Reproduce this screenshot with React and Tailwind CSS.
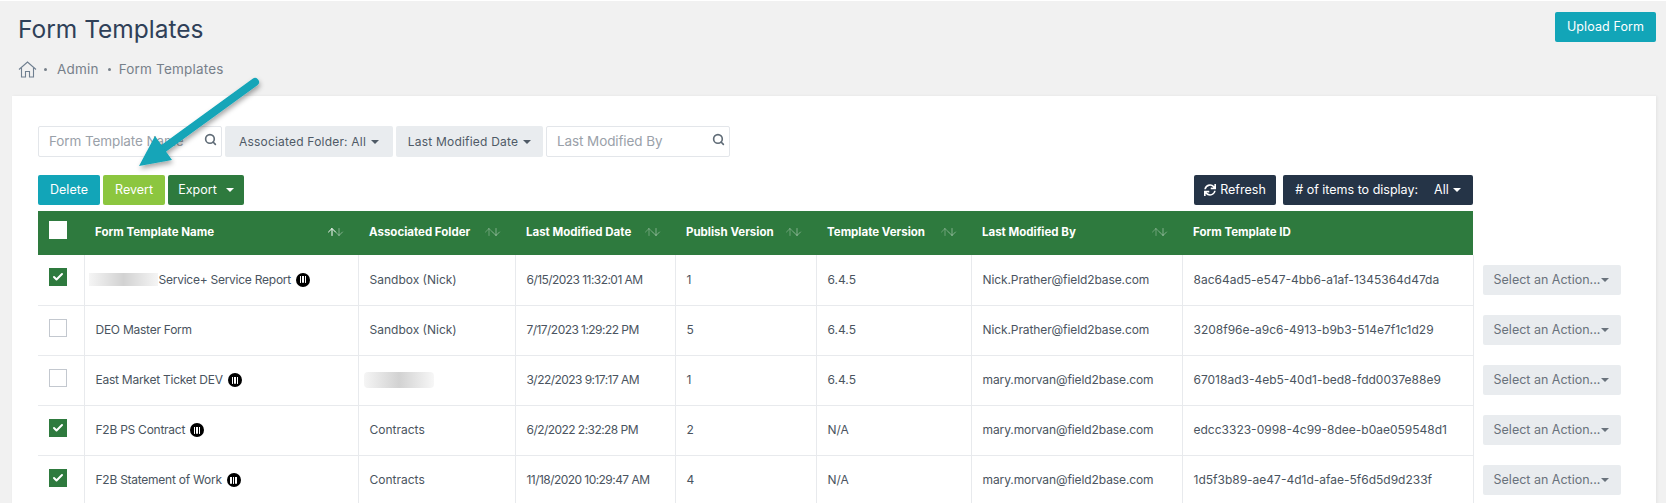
import React from "react"
import { Search, ArrowUp, ArrowDown, Check } from "lucide-react"
import { FaSync } from "react-icons/fa"

const rows = [
  { checked: true, name: "Service+ Service Report", blurName: true, badge: true, folder: "Sandbox (Nick)", date: "6/15/2023 11:32:01 AM", pub: "1", tpl: "6.4.5", by: "Nick.Prather@field2base.com", id: "8ac64ad5-e547-4bb6-a1af-1345364d47da" },
  { checked: false, name: "DEO Master Form", folder: "Sandbox (Nick)", date: "7/17/2023 1:29:22 PM", pub: "5", tpl: "6.4.5", by: "Nick.Prather@field2base.com", id: "3208f96e-a9c6-4913-b9b3-514e7f1c1d29" },
  { checked: false, name: "East Market Ticket DEV", badge: true, blurFolder: true, date: "3/22/2023 9:17:17 AM", pub: "1", tpl: "6.4.5", by: "mary.morvan@field2base.com", id: "67018ad3-4eb5-40d1-bed8-fdd0037e88e9" },
  { checked: true, name: "F2B PS Contract", badge: true, folder: "Contracts", date: "6/2/2022 2:32:28 PM", pub: "2", tpl: "N/A", by: "mary.morvan@field2base.com", id: "edcc3323-0998-4c99-8dee-b0ae059548d1" },
  { checked: true, name: "F2B Statement of Work", badge: true, folder: "Contracts", date: "11/18/2020 10:29:47 AM", pub: "4", tpl: "N/A", by: "mary.morvan@field2base.com", id: "1d5f3b89-ae47-4d1d-afae-5f6d5d9d233f" },
]

const headers = [
  { label: "Form Template Name", sort: true, active: true },
  { label: "Associated Folder", sort: true },
  { label: "Last Modified Date", sort: true },
  { label: "Publish Version", sort: true },
  { label: "Template Version", sort: true },
  { label: "Last Modified By", sort: true },
  { label: "Form Template ID" },
]

function Caret({ className = "" }) {
  return <span className={"inline-block w-0 h-0 border-x-[4px] border-x-transparent border-t-[4px] border-t-current " + className} />
}

function SortIcon({ active }) {
  return (
    <span className={"flex items-center -space-x-[5px] mb-[2px] " + (active ? "text-white" : "text-white/30")}>
      <ArrowUp size={12} strokeWidth={2} />
      <ArrowDown size={12} strokeWidth={2} className="text-white/40" />
    </span>
  )
}

function WBadge() {
  return (
    <span className="inline-flex items-center justify-center gap-[1px] w-[14px] h-[14px] rounded-full bg-black align-middle ml-[5px] shrink-0">
      <span className="w-[1.5px] h-[7px] bg-white rounded-b-[1px]" />
      <span className="w-[1.5px] h-[7px] bg-white rounded-b-[1px]" />
      <span className="w-[1.5px] h-[7px] bg-white rounded-b-[1px]" />
    </span>
  )
}

function Box({ checked }) {
  if (checked) {
    return (
      <span className="flex items-center justify-center w-[18px] h-[18px] mb-[5px] bg-[#2e7a3e]">
        <Check size={12} strokeWidth={4} className="text-white" />
      </span>
    )
  }
  return <span className="block w-[18px] h-[18px] mb-[5px] bg-white border border-[#c3c8cf]" />
}

function SearchInput({ placeholder, className }) {
  return (
    <div className={"flex items-center justify-between h-[31px] bg-white border border-[#e3e6ea] rounded-[2px] pl-[10px] pr-[4px] " + className}>
      <span className="text-[13.5px] tracking-[-0.1px] text-[#9aa1a9]">{placeholder}</span>
      <Search size={13} strokeWidth={3} className="text-[#5f6b76] mb-[4px]" />
    </div>
  )
}

function FilterButton({ label, className }) {
  return (
    <div className={"flex items-center justify-center gap-[5px] h-[31px] bg-[#e9ecef] rounded-[2px] text-[12px] tracking-[0.2px] text-[#4f5a66] " + className}>
      {label}
      <Caret />
    </div>
  )
}

export default function App() {
  return (
    <div className="relative h-screen overflow-hidden bg-[#f1f1f1] border-t border-white font-['Inter',sans-serif]">
      <div className="flex justify-between pl-[18px] pr-[10px] pt-[11px] h-[95px]">
        <div>
          <h1 className="text-[24.5px] leading-[34px] font-normal text-[#2f4058]">Form Templates</h1>
          <div className="flex items-center mt-[13px] text-[13.5px] tracking-[0.2px] text-[#77808a]">
            <svg width="19" height="17" viewBox="0 0 19 17" fill="none" stroke="#6f7f90" strokeWidth="1.1" className="mr-[7px]">
              <path d="M1 8.5 9.5 1 18 8.5" />
              <path d="M3.5 7v9h4v-5.5h4V16h4V7" />
            </svg>
            <span className="w-[3px] h-[3px] rounded-full bg-[#77808a] mr-[10px]" />
            <span>Admin</span>
            <span className="w-[3px] h-[3px] rounded-full bg-[#77808a] ml-[9px] mr-[8px]" />
            <span>Form Templates</span>
          </div>
        </div>
        <button className="w-[101px] h-[30px] bg-[#12a5b8] rounded-[2px] text-white text-[12.5px] tracking-[0.1px]">Upload Form</button>
      </div>

      <div className="ml-[12px] w-[1644px] h-[420px] bg-white pl-[26px] pt-[30px] shadow-[1px_0_3px_rgba(0,0,0,0.06)]">
        <div className="flex gap-[3px]">
          <SearchInput placeholder="Form Template Name" className="w-[184px]" />
          <FilterButton label="Associated Folder: All" className="w-[168px]" />
          <FilterButton label="Last Modified Date" className="w-[147px]" />
          <SearchInput placeholder="Last Modified By" className="w-[184px]" />
        </div>

        <div className="flex items-center mt-[18px] w-[1435px] text-white text-[12.5px]">
          <button className="w-[62px] h-[30px] bg-[#12a5b8] rounded-[2px]">Delete</button>
          <button className="w-[62px] h-[30px] ml-[3px] bg-[#8cc63f] rounded-[2px]">Revert</button>
          <button className="flex items-center justify-center gap-[9px] w-[76px] h-[30px] ml-[3px] bg-[#2e7a3e] rounded-[2px]">
            Export <Caret />
          </button>
          <button className="flex items-center justify-center gap-[4px] w-[82px] h-[30px] ml-auto bg-[#253447] rounded-[2px]">
            <FaSync size={12} /> Refresh
          </button>
          <button className="flex items-center justify-center gap-[16px] w-[190px] h-[30px] ml-[7px] bg-[#253447] rounded-[2px]">
            # of items to display:
            <span className="flex items-center gap-[4px]">All <Caret /></span>
          </button>
        </div>

        <table className="mt-[6px] table-fixed border-collapse w-[1583px] text-[12px] text-[#4a5460]">
          <colgroup>
            <col className="w-[46px]" />
            <col className="w-[274px]" />
            <col className="w-[157px]" />
            <col className="w-[160px]" />
            <col className="w-[141px]" />
            <col className="w-[155px]" />
            <col className="w-[211px]" />
            <col className="w-[291px]" />
            <col />
          </colgroup>
          <thead>
            <tr className="h-[44px]">
              <th className="bg-[#2e7a3e] pl-[11px] text-left">
                <span className="block w-[18px] h-[18px] mb-[6px] bg-white" />
              </th>
              {headers.map((h) => (
                <th key={h.label} className="bg-[#2e7a3e] pl-[11px] pr-[13px] text-left">
                  <div className="flex items-center justify-between text-white text-[11.5px] font-bold whitespace-nowrap">
                    {h.label}
                    {h.sort && <SortIcon active={h.active} />}
                  </div>
                </th>
              ))}
              <th />
            </tr>
          </thead>
          <tbody>
            {rows.map((r) => (
              <tr key={r.id} className="h-[50px]">
                <td className="border-r border-b border-[#e8eaed] pl-[11px]">
                  <Box checked={r.checked} />
                </td>
                <td className="border-r border-b border-[#e8eaed] pl-[11px] whitespace-nowrap tracking-[-0.25px]">
                  <div className="flex items-center">
                    {r.blurName && (
                      <span className="w-[69px] h-[13px] -ml-[7px] mr-[1px] bg-gradient-to-r from-[#f5f5f5] via-[#d2d2d2] to-[#f5f5f5]" />
                    )}
                    {r.name}
                    {r.badge && <WBadge />}
                  </div>
                </td>
                <td className="border-r border-b border-[#e8eaed] pl-[11px] whitespace-nowrap">
                  {r.blurFolder ? (
                    <span className="block w-[70px] h-[16px] -ml-[6px] rounded-sm bg-gradient-to-r from-[#f5f5f5] via-[#d2d2d2] to-[#f7f7f7]" />
                  ) : (
                    r.folder
                  )}
                </td>
                <td className="border-r border-b border-[#e8eaed] pl-[11px] whitespace-nowrap tracking-[-0.55px]">{r.date}</td>
                <td className="border-r border-b border-[#e8eaed] pl-[11px]">{r.pub}</td>
                <td className="border-r border-b border-[#e8eaed] pl-[11px]">{r.tpl}</td>
                <td className="border-r border-b border-[#e8eaed] pl-[11px] whitespace-nowrap tracking-[-0.1px]">{r.by}</td>
                <td className="border-r border-b border-[#e8eaed] pl-[11px] whitespace-nowrap">{r.id}</td>
                <td className="pl-[9px]">
                  <div className="flex items-center justify-center gap-[1px] w-[138px] h-[30px] bg-[#e9ecef] rounded-[2px] text-[#69727c] text-[12.5px]">
                    Select an Action...
                    <Caret />
                  </div>
                </td>
              </tr>
            ))}
          </tbody>
        </table>
      </div>

      {/* annotation arrow over the toolbar */}
      <svg width="300" height="200" viewBox="0 0 300 200" className="absolute left-0 top-0 pointer-events-none overflow-visible">
        <defs>
          <filter id="arrowShadow" x="-20%" y="-20%" width="150%" height="150%">
            <feDropShadow dx="1" dy="3" stdDeviation="2.5" floodColor="#000" floodOpacity="0.35" />
          </filter>
        </defs>
        <g filter="url(#arrowShadow)">
          <path d="M255 81 160 150" stroke="#12a5b8" strokeWidth="8" strokeLinecap="round" fill="none" />
          <path d="M139 165 155 135 172 159Z" fill="#12a5b8" />
        </g>
      </svg>
    </div>
  )
}
